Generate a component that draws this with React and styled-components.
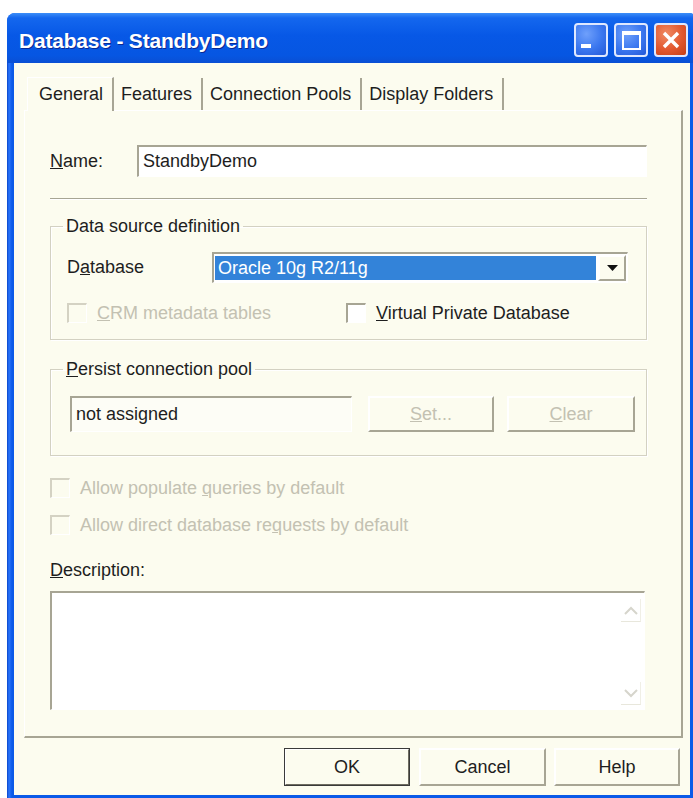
import React from "react";
import styled, { createGlobalStyle, css } from "styled-components";

const GlobalStyle = createGlobalStyle`
  html, body {
    margin: 0;
    padding: 0;
    background: #ffffff;
    overflow: hidden;
  }
  body {
    font-family: "Liberation Sans", Arial, sans-serif;
    font-size: 18px;
    color: #1e1e1e;
  }
`;

const cream = "#fcfcef";
const shadow = "#a7a594";
const disabled = "#c3c1b2";

const sunken = css`
  border-top: 2px solid ${shadow};
  border-left: 2px solid ${shadow};
  border-right: 1px solid #ffffff;
  border-bottom: 1px solid #ffffff;
`;

const raised = css`
  border-top: 2px solid #ffffff;
  border-left: 2px solid #ffffff;
  border-right: 2px solid ${shadow};
  border-bottom: 2px solid ${shadow};
`;

const Window = styled.div`
  margin: 13px 0 0 7px;
  width: 690px;
  height: 788px;
  display: flex;
  flex-direction: column;
  border-radius: 8px 8px 0 0;
  background: linear-gradient(90deg, #0843c8 0, #2a74fb 2px, #0b5ae8 5px, #0b5ae8 100%);
`;

const TitleBar = styled.div`
  height: 50px;
  flex-shrink: 0;
  display: flex;
  align-items: center;
  justify-content: space-between;
  padding: 0 9px 0 12px;
  box-sizing: border-box;
  border-radius: 8px 8px 0 0;
  background: linear-gradient(
    180deg,
    #3c8ef8 0%,
    #1467ee 10%,
    #0758e6 45%,
    #0656e2 85%,
    #0a4fd4 100%
  );
`;

const Title = styled.div`
  font-size: 21px;
  font-weight: bold;
  color: #ffffff;
  letter-spacing: -0.2px;
  padding-top: 6px;
  text-shadow: 1px 1px 0 #0b2a93;
`;

const Controls = styled.div`
  display: flex;
  gap: 6px;
  align-self: flex-start;
  margin-top: 10px;
`;

const CaptionButton = styled.div`
  width: 34px;
  height: 34px;
  box-sizing: border-box;
  border: 2px solid #dfe8ff;
  border-radius: 4px;
  display: flex;
  align-items: center;
  justify-content: center;
  background: ${(p) =>
    p.$close
      ? "radial-gradient(circle at 35% 30%, #f08a63 0%, #e2582f 55%, #c43e16 100%)"
      : "radial-gradient(circle at 35% 30%, #6fa0fb 0%, #3b77ef 55%, #2358d8 100%)"};
`;

const MinGlyph = styled.div`
  width: 10px;
  height: 4px;
  background: #ffffff;
  align-self: flex-end;
  margin: 0 10px 7px 0;
`;

const MaxGlyph = styled.div`
  width: 19px;
  height: 19px;
  box-sizing: border-box;
  border: 2px solid #ffffff;
  border-top-width: 4px;
`;

const Client = styled.div`
  flex: 1;
  margin: 0 7px 6px;
  background: ${cream};
  display: flex;
  flex-direction: column;
  padding: 13px 7px 9px 10px;
  box-sizing: border-box;
`;

const TabStrip = styled.div`
  height: 34px;
  display: flex;
  align-items: flex-end;
  padding-left: 3px;
`;

const Tab = styled.div`
  height: ${(p) => (p.$active ? 34 : 32)}px;
  box-sizing: border-box;
  display: flex;
  align-items: center;
  padding: ${(p) => (p.$active ? "0 9px 0 11px" : "0 9px 0 7px")};
  border-right: 2px solid ${shadow};
  ${(p) =>
    p.$active &&
    css`
      border-top: 1px solid #ffffff;
      border-left: 1px solid #ffffff;
      margin-bottom: -1px;
      position: relative;
      background: ${cream};
    `}
`;

const Panel = styled.div`
  height: 628px;
  box-sizing: border-box;
  border-top: 1px solid #ffffff;
  border-left: 1px solid #ffffff;
  border-right: 2px solid ${shadow};
  border-bottom: 2px solid ${shadow};
  padding: 34px 34px 0 25px;
  display: flex;
  flex-direction: column;
`;

const NameRow = styled.div`
  display: flex;
  align-items: center;
  height: 32px;
`;

const Label = styled.div`
  width: ${(p) => p.$w || "auto"};
  flex-shrink: 0;
  color: ${(p) => (p.$dim ? disabled : "#1e1e1e")};
  white-space: nowrap;
`;

const TextBox = styled.div`
  flex: 1;
  height: 100%;
  box-sizing: border-box;
  ${sunken};
  background: #ffffff;
  display: flex;
  align-items: center;
  padding-left: 4px;
`;

const Separator = styled.div`
  margin-top: 21px;
  border-top: 1px solid ${shadow};
  border-bottom: 1px solid #ffffff;
`;

const Group = styled.fieldset`
  margin: ${(p) => p.$top}px 0 0;
  padding: 0;
  min-width: 0;
  border: 1px solid #d3d1c2;
  box-shadow: 1px 1px 0 #ffffff, inset 1px 1px 0 #ffffff;
`;

const Legend = styled.legend`
  margin-left: 12px;
  padding: 0 3px;
  line-height: 22px;
`;

const GroupBody = styled.div`
  padding: ${(p) => p.$pad};
`;

const SelectRow = styled.div`
  display: flex;
  align-items: center;
  height: 31px;
`;

const Select = styled.div`
  flex: 1;
  height: 100%;
  box-sizing: border-box;
  ${sunken};
  background: #ffffff;
  display: flex;
  padding: 1px;
`;

const Selected = styled.div`
  flex: 1;
  margin: 1px 2px 1px 0;
  background: #3383d9;
  color: #ffffff;
  display: flex;
  align-items: center;
  padding-left: 3px;
`;

const DropButton = styled.div`
  width: 28px;
  box-sizing: border-box;
  ${raised};
  background: ${cream};
  display: flex;
  align-items: center;
  justify-content: center;
`;

const CheckGrid = styled.div`
  display: grid;
  grid-template-columns: 279px 1fr;
  margin-top: 18px;
`;

const CheckLine = styled.div`
  display: flex;
  align-items: center;
  height: 24px;
  margin-top: ${(p) => p.$top || 0}px;
  color: ${(p) => (p.$dim ? disabled : "#1e1e1e")};
  white-space: nowrap;
`;

const Box = styled.div`
  width: 20px;
  height: 20px;
  box-sizing: border-box;
  margin-right: 10px;
  flex-shrink: 0;
  border-top: 2px solid ${(p) => (p.$dim ? "#d4d2c3" : shadow)};
  border-left: 2px solid ${(p) => (p.$dim ? "#d4d2c3" : shadow)};
  border-right: 1px solid #ffffff;
  border-bottom: 1px solid #ffffff;
  background: ${(p) => (p.$dim ? cream : "#ffffff")};
`;

const PoolRow = styled.div`
  display: flex;
  height: 36px;
`;

const ReadOnlyField = styled.div`
  width: 282px;
  box-sizing: border-box;
  ${sunken};
  background: #fdfdf6;
  display: flex;
  align-items: center;
  padding-left: 4px;
  margin-right: 16px;
`;

const Button = styled.div`
  width: ${(p) => p.$w}px;
  height: ${(p) => p.$h || 36}px;
  box-sizing: border-box;
  ${raised};
  background: ${cream};
  color: ${(p) => (p.$dim ? disabled : "#1e1e1e")};
  display: flex;
  align-items: center;
  justify-content: center;
  margin-left: ${(p) => p.$gap || 0}px;
  ${(p) =>
    p.$default &&
    css`
      outline: 1px solid #3a3a3a;
      outline-offset: -1px;
      border-right-color: #6e6c60;
      border-bottom-color: #6e6c60;
    `}
`;

const DescLabel = styled.div`
  margin-top: 22px;
  line-height: 22px;
`;

const Memo = styled.div`
  margin: 10px 2px 0 0;
  height: 119px;
  box-sizing: border-box;
  ${sunken};
  background: #ffffff;
  display: flex;
  justify-content: flex-end;
  padding: 6px 3px 4px 0;
`;

const ScrollColumn = styled.div`
  width: 20px;
  display: flex;
  flex-direction: column;
  justify-content: space-between;
`;

const Arrow = styled.div`
  height: 22px;
  display: flex;
  align-items: center;
  justify-content: center;
  border-right: 1px solid #f0efe6;
  border-bottom: 1px solid #e8e7dc;
`;

const ButtonBar = styled.div`
  display: flex;
  justify-content: flex-end;
  margin: 10px 3px 0 0;
`;

const Chevron = ({ up }) => (
  <svg width="14" height="9" viewBox="0 0 14 9">
    <path
      d={up ? "M1 8 L7 2 L13 8" : "M1 1 L7 7 L13 1"}
      fill="none"
      stroke="#d6d5cc"
      strokeWidth="2"
    />
  </svg>
);

export default function App() {
  return (
    <>
      <GlobalStyle />
      <Window>
        <TitleBar>
          <Title>Database - StandbyDemo</Title>
          <Controls>
            <CaptionButton>
              <MinGlyph />
            </CaptionButton>
            <CaptionButton>
              <MaxGlyph />
            </CaptionButton>
            <CaptionButton $close>
              <svg width="20" height="20" viewBox="0 0 20 20">
                <path d="M3 3 L17 17 M17 3 L3 17" stroke="#ffffff" strokeWidth="3.4" />
              </svg>
            </CaptionButton>
          </Controls>
        </TitleBar>

        <Client>
          <TabStrip>
            <Tab $active>General</Tab>
            <Tab>Features</Tab>
            <Tab>Connection Pools</Tab>
            <Tab>Display Folders</Tab>
          </TabStrip>

          <Panel>
            <NameRow>
              <Label $w="87px">
                <u>N</u>ame:
              </Label>
              <TextBox>StandbyDemo</TextBox>
            </NameRow>

            <Separator />

            <Group $top={15}>
              <Legend>Data source definition</Legend>
              <GroupBody $pad="15px 18px 14px 16px">
                <SelectRow>
                  <Label $w="145px">
                    D<u>a</u>tabase
                  </Label>
                  <Select>
                    <Selected>Oracle 10g R2/11g</Selected>
                    <DropButton>
                      <svg width="11" height="6" viewBox="0 0 11 6">
                        <path d="M0 0 H11 L5.5 6 Z" fill="#111111" />
                      </svg>
                    </DropButton>
                  </Select>
                </SelectRow>
                <CheckGrid>
                  <CheckLine $dim>
                    <Box $dim />
                    <span>
                      <u>C</u>RM metadata tables
                    </span>
                  </CheckLine>
                  <CheckLine>
                    <Box />
                    <span>
                      <u>V</u>irtual Private Database
                    </span>
                  </CheckLine>
                </CheckGrid>
              </GroupBody>
            </Group>

            <Group $top={18}>
              <Legend>
                <u>P</u>ersist connection pool
              </Legend>
              <GroupBody $pad="16px 11px 23px 19px">
                <PoolRow>
                  <ReadOnlyField>not assigned</ReadOnlyField>
                  <Button $w={126} $dim>
                    <span>
                      <u>S</u>et...
                    </span>
                  </Button>
                  <Button $w={128} $gap={13} $dim>
                    <span>
                      <u>C</u>lear
                    </span>
                  </Button>
                </PoolRow>
              </GroupBody>
            </Group>

            <CheckLine $dim $top={20}>
              <Box $dim />
              <span>
                Allow populate <u>q</u>ueries by default
              </span>
            </CheckLine>
            <CheckLine $dim $top={13}>
              <Box $dim />
              <span>
                Allow direct database re<u>q</u>uests by default
              </span>
            </CheckLine>

            <DescLabel>
              <u>D</u>escription:
            </DescLabel>
            <Memo>
              <ScrollColumn>
                <Arrow>
                  <Chevron up />
                </Arrow>
                <Arrow>
                  <Chevron />
                </Arrow>
              </ScrollColumn>
            </Memo>
          </Panel>

          <ButtonBar>
            <Button $w={126} $h={38} $default>
              OK
            </Button>
            <Button $w={127} $h={38} $gap={9}>
              Cancel
            </Button>
            <Button $w={126} $h={38} $gap={8}>
              Help
            </Button>
          </ButtonBar>
        </Client>
      </Window>
    </>
  );
}
